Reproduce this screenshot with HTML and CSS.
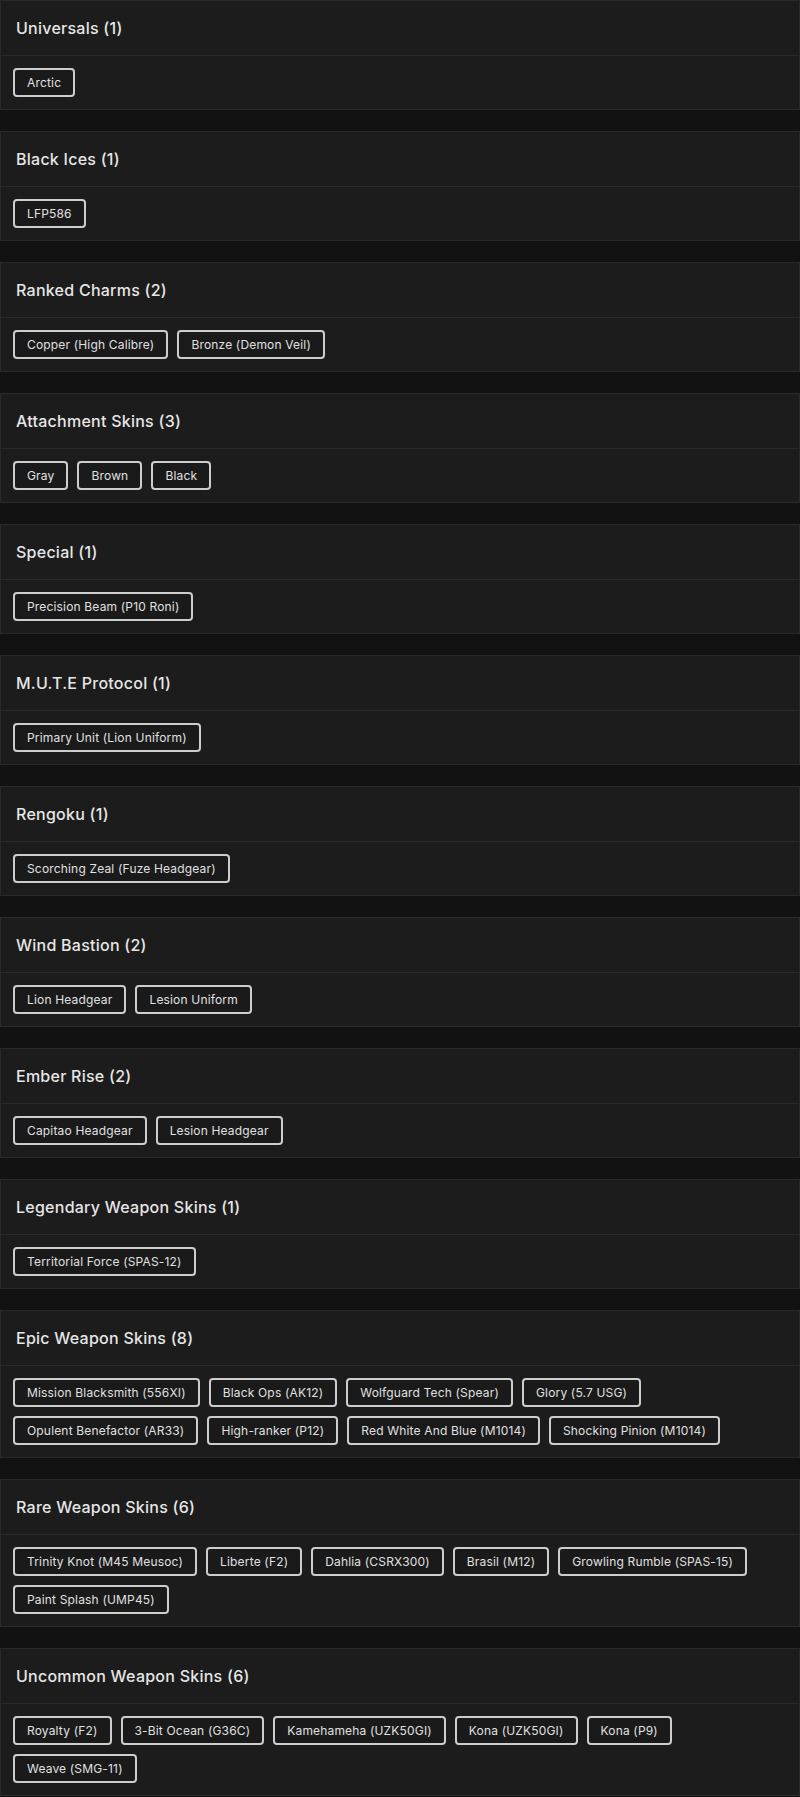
FILE: index.html
```html
<!DOCTYPE html>
<html lang="en">
<head>
<meta charset="utf-8">
<title>Items</title>
<link rel="stylesheet" href="styles.css">
</head>
<body>
<main class="list">
  <section class="card">
    <h2 class="card-head">Universals (1)</h2>
    <div class="card-body"><span class="chip">Arctic</span></div>
  </section>
  <section class="card">
    <h2 class="card-head">Black Ices (1)</h2>
    <div class="card-body"><span class="chip">LFP586</span></div>
  </section>
  <section class="card">
    <h2 class="card-head">Ranked Charms (2)</h2>
    <div class="card-body"><span class="chip">Copper (High Calibre)</span><span class="chip">Bronze (Demon Veil)</span></div>
  </section>
  <section class="card">
    <h2 class="card-head">Attachment Skins (3)</h2>
    <div class="card-body"><span class="chip">Gray</span><span class="chip">Brown</span><span class="chip">Black</span></div>
  </section>
  <section class="card">
    <h2 class="card-head">Special (1)</h2>
    <div class="card-body"><span class="chip">Precision Beam (P10 Roni)</span></div>
  </section>
  <section class="card">
    <h2 class="card-head">M.U.T.E Protocol (1)</h2>
    <div class="card-body"><span class="chip">Primary Unit (Lion Uniform)</span></div>
  </section>
  <section class="card">
    <h2 class="card-head">Rengoku (1)</h2>
    <div class="card-body"><span class="chip">Scorching Zeal (Fuze Headgear)</span></div>
  </section>
  <section class="card">
    <h2 class="card-head">Wind Bastion (2)</h2>
    <div class="card-body"><span class="chip">Lion Headgear</span><span class="chip">Lesion Uniform</span></div>
  </section>
  <section class="card">
    <h2 class="card-head">Ember Rise (2)</h2>
    <div class="card-body"><span class="chip">Capitao Headgear</span><span class="chip">Lesion Headgear</span></div>
  </section>
  <section class="card">
    <h2 class="card-head">Legendary Weapon Skins (1)</h2>
    <div class="card-body"><span class="chip">Territorial Force (SPAS-12)</span></div>
  </section>
  <section class="card">
    <h2 class="card-head">Epic Weapon Skins (8)</h2>
    <div class="card-body"><span class="chip">Mission Blacksmith (556XI)</span><span class="chip">Black Ops (AK12)</span><span class="chip">Wolfguard Tech (Spear)</span><span class="chip">Glory (5.7 USG)</span><span class="chip">Opulent Benefactor (AR33)</span><span class="chip">High-ranker (P12)</span><span class="chip">Red White And Blue (M1014)</span><span class="chip">Shocking Pinion (M1014)</span></div>
  </section>
  <section class="card">
    <h2 class="card-head">Rare Weapon Skins (6)</h2>
    <div class="card-body"><span class="chip">Trinity Knot (M45 Meusoc)</span><span class="chip">Liberte (F2)</span><span class="chip">Dahlia (CSRX300)</span><span class="chip">Brasil (M12)</span><span class="chip">Growling Rumble (SPAS-15)</span><span class="chip">Paint Splash (UMP45)</span></div>
  </section>
  <section class="card">
    <h2 class="card-head">Uncommon Weapon Skins (6)</h2>
    <div class="card-body"><span class="chip">Royalty (F2)</span><span class="chip">3-Bit Ocean (G36C)</span><span class="chip">Kamehameha (UZK50GI)</span><span class="chip">Kona (UZK50GI)</span><span class="chip">Kona (P9)</span><span class="chip">Weave (SMG-11)</span></div>
  </section>
</main>
</body>
</html>
```

FILE: styles.css
```css
html, body {
  margin: 0;
  padding: 0;
  background: #121212;
}
body {
  font-family: Inter, "Noto Sans", "Liberation Sans", sans-serif;
  color: #e4e4e4;
}
.list {
  display: flex;
  flex-direction: column;
  gap: 21px;
}
.card {
  background: #1c1c1c;
  border: 1px solid #2a2a2a;
}
.card-head {
  margin: 0;
  padding: 17px 15px;
  font-size: 16px;
  line-height: 20px;
  font-weight: 500;
  letter-spacing: 0.25px;
  color: #e6e6e6;
  border-bottom: 1px solid #2a2a2a;
}
.card-body {
  display: flex;
  flex-wrap: wrap;
  gap: 9px;
  padding: 12px;
}
.chip {
  display: inline-block;
  padding: 5px 12px;
  font-size: 12px;
  line-height: 15px;
  letter-spacing: 0.17px;
  color: #e0e0e0;
  background: #1a1a1a;
  border: 2px solid #cdcdcd;
  border-radius: 4px;
  white-space: nowrap;
}
```
